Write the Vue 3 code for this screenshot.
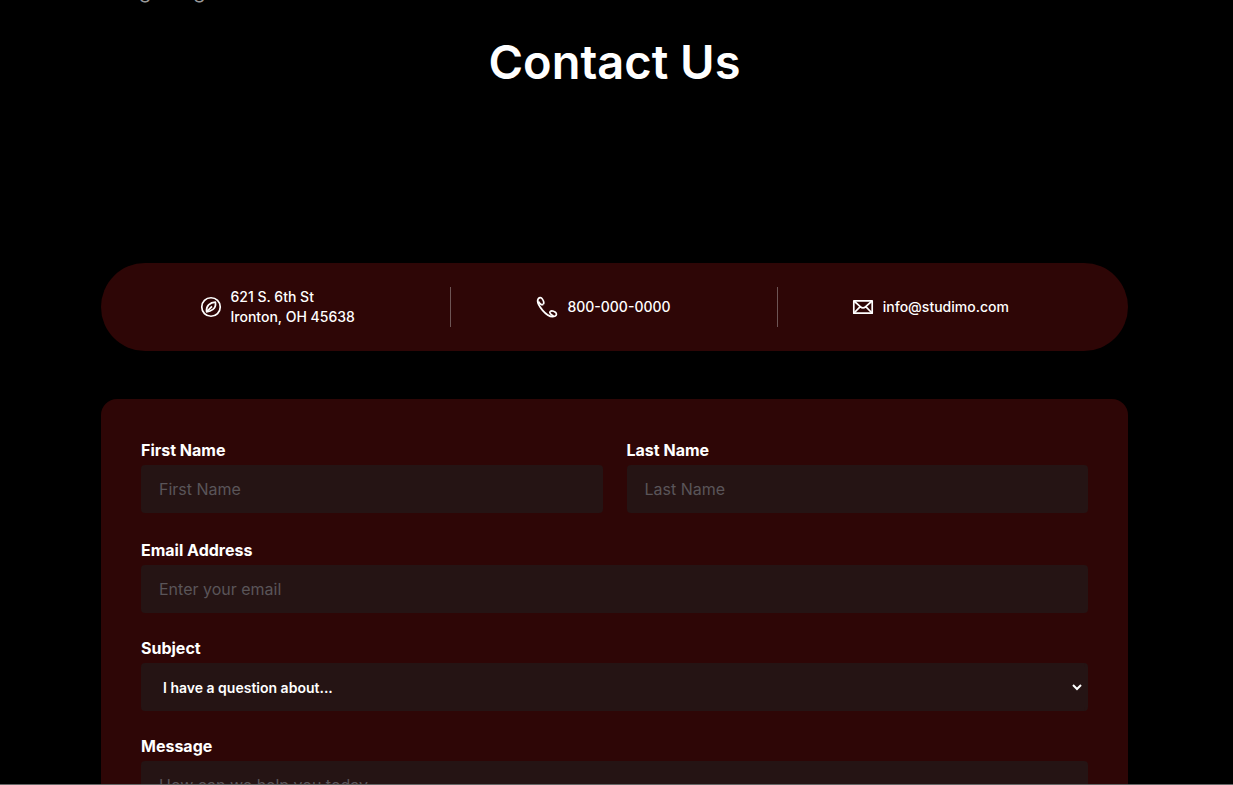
<script setup>
import { ref } from 'vue'

const firstName = ref('')
const lastName = ref('')
const email = ref('')
const subject = ref('question')
const message = ref('')
</script>

<template>
  <main class="page">
    <p class="intro"><span>g</span><span>g</span></p>
    <h1 class="title">Contact Us</h1>

    <address class="info">
      <div class="item">
        <svg class="icon" viewBox="0 0 24 24" aria-hidden="true">
          <circle cx="12" cy="12" r="9.25" />
          <path d="M16.4 7.2c.6 3.800-.6 5.900-2.400 7.200-1.800 1.400-3.900 2.200-6.400 2.400-.4-3.200.4-5.400 2-7 1.700-1.500 3.800-2.400 6.800-2.600z" />
          <path d="M8 16.400l5-5" />
        </svg>
        <span>621 S. 6th St<br />Ironton, OH 45638</span>
      </div>
      <div class="item">
        <svg class="icon" viewBox="0 0 24 24" aria-hidden="true">
          <path d="M8.200 9.300C9.300 8.100 8.500 5.700 7.300 3.900C6.300 2.300 4.500 2.200 3.400 3.600C1.900 5.600 3.100 10.200 7.600 15.400C12.300 20.800 17.200 22.600 20.300 21C21.800 20.200 21.800 18.300 20.400 17.300C18.700 16.100 16.400 15.500 15.100 16.600" />
          <path d="M3.400 6.500C4.900 9 6.800 10.400 8.200 9.300M15.100 16.600C14.100 17.900 15.800 19.500 18.600 21" />
        </svg>
        <a href="tel:8000000000">800-000-0000</a>
      </div>
      <div class="item">
        <svg class="icon" viewBox="0 0 24 24" aria-hidden="true">
          <path d="M2.800 5.800h18.400v12.400H2.800z" />
          <path d="M3 6l6.300 5.600c1.600 1.500 3.800 1.500 5.400 0L21 6M3 18l6.200-6.400M21 18l-6.200-6.400" />
        </svg>
        <a href="mailto:info@studimo.com">info@studimo.com</a>
      </div>
    </address>

    <form class="form" @submit.prevent>
      <div class="names">
        <div class="field">
          <label for="first-name">First Name</label>
          <input id="first-name" v-model="firstName" type="text" placeholder="First Name" />
        </div>
        <div class="field">
          <label for="last-name">Last Name</label>
          <input id="last-name" v-model="lastName" type="text" placeholder="Last Name" />
        </div>
      </div>
      <div class="field">
        <label for="email">Email Address</label>
        <input id="email" v-model="email" type="email" placeholder="Enter your email" />
      </div>
      <div class="field">
        <label for="subject">Subject</label>
        <select id="subject" v-model="subject">
          <option value="question">I have a question about...</option>
        </select>
      </div>
      <div class="field">
        <label for="message">Message</label>
        <textarea id="message" v-model="message" rows="5" placeholder="How can we help you today"></textarea>
      </div>
    </form>
  </main>
</template>

<style>
body {
  background: #000;
}
</style>

<style scoped>
.page {
  box-sizing: border-box;
  height: 100vh;
  overflow: hidden;
  padding: 0 105px 0 101px;
  border-bottom: 1px solid #666;
  background: #000;
  color: #fff;
  font-family: Inter, "Liberation Sans", sans-serif;
}

.intro {
  display: flex;
  gap: 42px;
  margin: -21px 0 0;
  padding-left: 38px;
  color: #999;
  font-size: 20px;
  line-height: 24px;
}

.title {
  margin: 29px 0 0;
  font-size: 47px;
  font-weight: 600;
  line-height: 60px;
  text-align: center;
}

.info {
  display: grid;
  grid-template-columns: repeat(3, 1fr);
  margin-top: 171px;
  padding: 24px;
  border-radius: 44px;
  background: #2e0606;
  font-size: 14px;
  font-style: normal;
  font-weight: 500;
  line-height: 20px;
}

.item {
  display: flex;
  align-items: center;
  justify-content: center;
  gap: 8px;
  min-height: 40px;
  padding-right: 22px;
}

.item:not(:last-child) {
  border-right: 1px solid #6d5555;
}

.item a {
  color: inherit;
  text-decoration: none;
}

.icon {
  flex: none;
  width: 24px;
  height: 24px;
  fill: none;
  stroke: #fff;
  stroke-width: 1.7;
  stroke-linejoin: round;
}

.form {
  display: flex;
  flex-direction: column;
  gap: 24px;
  margin-top: 48px;
  padding: 40px;
  border-radius: 16px;
  background: #2e0606;
}

.names {
  display: grid;
  grid-template-columns: 1fr 1fr;
  gap: 24px;
  margin-bottom: 2px;
}

.field {
  display: flex;
  flex-direction: column;
  gap: 4px;
}

label {
  font-size: 16px;
  font-weight: 700;
  line-height: 22px;
}

input,
select,
textarea {
  box-sizing: border-box;
  width: 100%;
  height: 48px;
  margin: 0;
  padding: 0 18px;
  border: 0;
  border-radius: 4px;
  background-color: #251414;
  color: #fff;
  font-family: inherit;
  font-size: 16px;
}

select {
  padding: 0 0 0 18px;
  border-right: 3px solid #251414;
  font-size: 14px;
  font-weight: 600;
}

textarea {
  height: 144px;
  padding: 12px 18px;
  line-height: 24px;
  resize: none;
}

input::placeholder,
textarea::placeholder {
  color: #5a5559;
  opacity: 1;
}
</style>
